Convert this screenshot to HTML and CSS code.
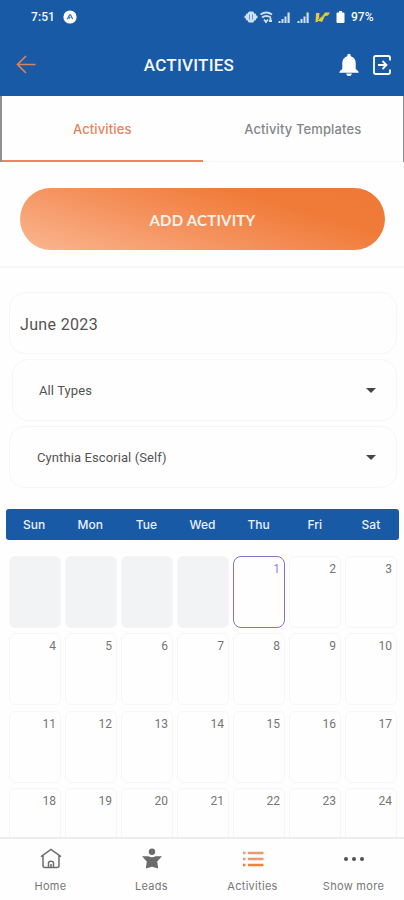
FILE: index.html
```html
<!DOCTYPE html>
<html lang="en">
<head>
<meta charset="utf-8">
<title>Activities</title>
<link rel="stylesheet" href="styles.css">
</head>
<body>
<div class="screen">
  <header class="header">
    <div class="status">
      <span class="clock">7:51</span>
      <svg class="badge" width="14" height="14" viewBox="0 0 14 14"><circle cx="7" cy="7" r="6.6" fill="#fff"/><path d="M4.3 9.2 6.6 4.8h1l2 4.2M6 8.6l1.2-1.8" fill="none" stroke="#3a6fb0" stroke-width="1.2"/></svg>
      <svg class="signals" width="104" height="16" viewBox="0 0 104 16">
        <g fill="#cfe0f4">
          <rect x="5" y="2.500" width="6" height="11" rx="1.500"/><rect x="3" y="4.500" width="10" height="7" rx="1"/><rect x="1.500" y="6.500" width="13" height="3" rx="1"/>
          <path d="M35.500 12h2v2h-2zM38.500 10h2v4h-2zM41.500 7.500h2V14h-2zM44.500 3.500h2.200V14h-2.200zM54.500 12h2v2h-2zM57.500 10h2v4h-2zM60.500 7.500h2V14h-2zM63.500 3.500h2.200V14h-2.200z"/>
        </g>
        <path d="M6.500 5.500v5M9.500 5.500v5" stroke="#6d97c9" fill="none"/>
        <g fill="none" stroke="#cfe0f4" stroke-width="1.800"><path d="M17.500 5.500q6-4 11.500 0M19 8.500q4-3 9 0"/><path d="m21 10.500 2 2.500 2-2.500M26 12h3M27.500 9v4"/></g>
        <path d="M73 4h3.500l-.5 5 3-1 3-4.500h5L85 6.500l-3 .5-3 6-3-1-3.500 1.500z" fill="#e8c93c"/>
        <path d="m75 11 6-6" stroke="#5d7f78"/>
        <path d="M96 2h3v1.500h1.500a1 1 0 0 1 1 1V13a1 1 0 0 1-1 1h-6a1 1 0 0 1-1-1V4.500a1 1 0 0 1 1-1H96z" fill="#fff"/>
      </svg>
      <span class="charge">97%</span>
    </div>
    <div class="appbar">
      <svg class="back" width="20" height="20" viewBox="0 0 20 20"><path d="M19.500 9.500H1.500M10 1 1.500 9.500 10 18" fill="none" stroke="#dd8255" stroke-width="1.700"/></svg>
      <h1 class="title"><span>ACTIVITIES</span></h1>
      <svg class="bell" width="22" height="24" viewBox="0 0 22 24"><path d="M11 .8c1 0 1.700.7 1.700 1.700v.7c3.300.8 5 3.500 5 6.800v5.500c0 1.300 3.100 2.300 3.100 4.200H1.200c0-1.900 3.100-2.900 3.100-4.200V10c0-3.300 1.700-6 5-6.800v-.7c0-1 .7-1.700 1.700-1.700zM8.300 20.400h5.400a2.700 2.500 0 0 1-5.400 0z" fill="#fff"/></svg>
      <svg class="exit" width="20" height="22" viewBox="0 0 20 22"><path d="M18 6.500V3.700Q18 2 16.300 2H3.700Q2 2 2 3.700v14.600Q2 20 3.700 20h12.600q1.700 0 1.700-1.700v-2.800M6 11h8.500M10.500 7l4 4-4 4" fill="none" stroke="#fff" stroke-width="1.800"/></svg>
    </div>
  </header>

  <nav class="tabs">
    <a class="tab tab-active"><span>Activities</span></a>
    <a class="tab"><span>Activity Templates</span></a>
  </nav>

  <section class="action"><button class="add"><span>ADD ACTIVITY</span></button></section>

  <section class="filters">
    <div class="field month"><span>June 2023</span></div>
    <div class="field types"><span>All Types</span><i class="caret"></i></div>
    <div class="field person"><span>Cynthia Escorial (Self)</span><i class="caret"></i></div>
  </section>

  <div class="weekdays"><span>Sun</span><span>Mon</span><span>Tue</span><span>Wed</span><span>Thu</span><span>Fri</span><span>Sat</span></div>

  <main class="days">
    <div class="day blank"></div><div class="day blank"></div><div class="day blank"></div><div class="day blank"></div><div class="day today">1</div><div class="day">2</div><div class="day">3</div>
    <div class="day">4</div><div class="day">5</div><div class="day">6</div><div class="day">7</div><div class="day">8</div><div class="day">9</div><div class="day">10</div>
    <div class="day">11</div><div class="day">12</div><div class="day">13</div><div class="day">14</div><div class="day">15</div><div class="day">16</div><div class="day">17</div>
    <div class="day">18</div><div class="day">19</div><div class="day">20</div><div class="day">21</div><div class="day">22</div><div class="day">23</div><div class="day">24</div>
  </main>

  <nav class="bottom">
    <a class="item"><svg width="22" height="22" viewBox="0 0 22 22"><path d="M1 8.700 11 1.500l10 7.200M3 7.500v10Q3 19.500 5 19.500h12q2 0 2-2v-10M8.500 19v-4q0-1.800 2.500-1.800t2.500 1.800v4M11 16v3" fill="none" stroke="#6d6d6d" stroke-width="1.500"/></svg><span class="l-home">Home</span></a>
    <a class="item"><svg width="22" height="22" viewBox="0 0 22 22"><circle cx="11" cy="3.800" r="3.200" fill="#6b6b6b"/><path d="M1 8.300h6.500q3.500 2 7 0H21l-4.800 5.200 1 7L11 18.800l-6.200 1.700 1-7z" fill="#6b6b6b"/></svg><span class="l-leads">Leads</span></a>
    <a class="item"><svg width="22" height="22" viewBox="0 0 22 22"><path d="M1 5h2.500M6 5h15.500M1 11h2.500M6 11h15.500" stroke="#ee9873" stroke-width="2.600"/><path d="M1 17h2.500M6 17h15.500" stroke="#e9863c" stroke-width="2.600"/></svg><span class="l-act">Activities</span></a>
    <a class="item"><svg width="22" height="22" viewBox="0 0 22 22"><g fill="#505050"><circle cx="3" cy="11" r="2"/><circle cx="11" cy="11" r="2"/><circle cx="19" cy="11" r="2"/></g></svg><span class="l-more">Show more</span></a>
  </nav>
</div>
</body>
</html>
```
FILE: styles.css
```css
* { box-sizing: border-box; }
body { margin: 0; background: #fefefe; font-family: Roboto, "Liberation Sans", sans-serif; }
.screen { width: 404px; height: 900px; display: flex; flex-direction: column; overflow: hidden; }
svg { display: block; flex: none; }
span { white-space: nowrap; }

.header { height: 96px; flex: none; background: #185aa6; color: #f4f8fd; }
.status { height: 34px; display: flex; align-items: center; padding: 0 29px 0 31px; }
.clock { font-size: 12px; font-weight: 500; width: 32px; letter-spacing: .1px; }
.signals { margin: 0 4px 0 auto; }
.charge { font-size: 12px; font-weight: 500; width: 24px; }
.appbar { height: 62px; display: flex; align-items: center; padding: 0 12px 0 16px; }
.title { flex: 1; margin: 0; padding-left: 4px; text-align: center; font-size: 17px; font-weight: 500; letter-spacing: .25px; }
.bell { margin-right: 12px; }

.tabs { height: 66px; flex: none; display: flex; border: solid #919195; border-width: 0 1px 0 2px; font: 500 13px Inter, sans-serif; letter-spacing: .12px; color: #85858a; }
.tab { flex: 1; display: flex; align-items: center; justify-content: center; border-bottom: 1px solid #f8f8f8; padding-top: 1px; }
.tab-active { color: #e88357; border-bottom: 2px solid #ee8460; }

.action { height: 106px; flex: none; padding: 26px 19px 0 20px; border-bottom: 2px solid #f6f6f6; }
.add { display: block; width: 100%; height: 62px; border: 0; border-radius: 31px; background: linear-gradient(17deg, #fab791 0%, #f5935f 40%, #f07b38 72%, #ef7836 100%); color: #fff2e9; font: 700 15px Lato, sans-serif; letter-spacing: .22px; padding: 2px 0 0; }

.filters { height: 241px; flex: none; padding: 24px 7px 0 9px; }
.field { display: flex; align-items: center; justify-content: space-between; border: 1px solid #f5f6f6; border-radius: 16px; color: #545454; font-size: 13px; letter-spacing: .1px; }
.month { height: 62px; padding: 2px 0 0 10px; font-size: 16px; letter-spacing: .35px; }
.types { height: 62px; margin: 5px 0 0 3px; padding: 1px 20px 0 26px; }
.person { height: 62px; margin-top: 5px; padding: 1px 20px 0 27px; }
.caret { border: solid transparent; border-width: 5px 5px 0; border-top-color: #454545; }

.weekdays { height: 31px; flex: none; margin: 0 5px 0 6px; border-radius: 3px; background: #185aa6; color: #e9f1fa; display: grid; grid-template-columns: repeat(7, 1fr); align-items: center; text-align: center; font: 500 12px Inter, sans-serif; }

.days { height: 297px; flex: none; overflow: hidden; padding: 16px 8px 0 9px; display: grid; grid-template-columns: repeat(7, 52px); grid-auto-rows: 72px; gap: 5.300px 4px; }
.day { border: 1px solid #f6f6f6; border-radius: 6px; padding: 5px 4px 0 0; text-align: right; color: #757575; font-size: 12px; line-height: 15px; }
.blank { background: #f2f3f5; }
.today { border-color: #8274c8; border-radius: 8px; color: #9585d2; }

.bottom { flex: 1; border-top: 2px solid #ececec; display: grid; grid-template-columns: repeat(4, 1fr); }
.item { display: flex; flex-direction: column; align-items: center; padding-top: 9px; gap: 9px; color: #777; font: 11px/14px Inter, sans-serif; letter-spacing: .3px; }
```
